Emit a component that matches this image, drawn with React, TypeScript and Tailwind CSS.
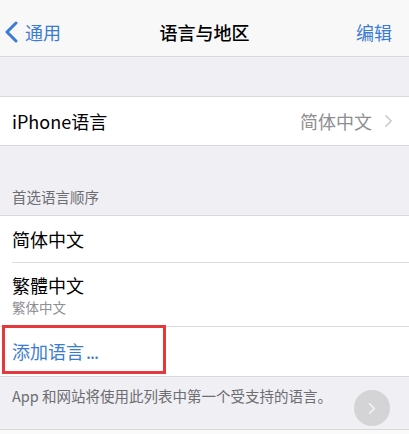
import React from 'react';

const FONT = { fontFamily: '"Noto Sans CJK SC", "Noto Sans", sans-serif' };

const Chevron: React.FC<{ className?: string }> = ({ className }) => (
    <svg viewBox="0 0 10 16" className={className} fill="none" stroke="currentColor" strokeWidth={1.8} strokeLinecap="round" strokeLinejoin="round">
        <path d="M2 2l6 6-6 6" />
    </svg>
);

const App: React.FC = () => {
    return (
        <div className="w-[409px] h-[434px] overflow-hidden bg-[#efeff4] flex flex-col" style={FONT}>
            {/* nav bar */}
            <header className="h-[57px] shrink-0 bg-[#f8f8f8] border-b border-[#d9d9dc] grid grid-cols-[1fr_auto_1fr] items-center pt-[8px]">
                <div className="flex items-center pl-[5px] text-[#3a7bd5]">
                    <svg viewBox="0 0 13 22" className="w-[13px] h-[22px]" fill="none" stroke="currentColor" strokeWidth={3} strokeLinecap="round" strokeLinejoin="round">
                        <path d="M11 2L2 11l9 9" />
                    </svg>
                    <span className="ml-[7px] text-[18px] leading-none">通用</span>
                </div>
                <div className="text-[18px] font-medium text-black leading-none">语言与地区</div>
                <div className="text-right pr-[17px] text-[18px] text-[#3a7bd5] leading-none">编辑</div>
            </header>

            <div className="h-[40px] shrink-0 border-b border-[#d9d9dc]" />

            <div className="h-[49px] shrink-0 bg-white border-b border-[#d9d9dc] flex items-center pl-[12px] pr-[16px]">
                <span className="text-[18px] text-black flex-1">iPhone语言</span>
                <span className="text-[18px] text-[#8e8e93]">简体中文</span>
                <Chevron className="w-[9px] h-[14px] ml-[12px] text-[#c7c7cc]" />
            </div>

            <div className="h-[70px] shrink-0 border-b border-[#d9d9dc] flex items-end pl-[12px] pb-[7px]">
                <span className="text-[14.5px] text-[#6d6d72]">首选语言顺序</span>
            </div>

            <div className="bg-white shrink-0 border-b border-[#d9d9dc]">
                <div className="pl-[12px]">
                    <div className="h-[47px] flex items-center border-b border-[#dcdcdf]">
                        <span className="text-[18px] text-black">简体中文</span>
                    </div>
                </div>
                <div className="h-[64px] pl-[12px] flex flex-col justify-center border-b border-[#dcdcdf]">
                    <span className="text-[18px] text-black leading-[22px]">繁體中文</span>
                    <span className="text-[13.5px] text-[#8e8e93] leading-[18px] mt-[2px]">繁体中文</span>
                </div>
                <div className="relative h-[49px] pl-[12px] flex items-center">
                    <span className="text-[18px] text-[#3a7bd5]">
                        添加语言<span className="ml-[2px] tracking-[-1px]">...</span>
                    </span>
                    <div className="absolute left-[2px] top-[-2px] w-[164px] h-[49px] border-[3px] border-[#e5383b]" />
                </div>
            </div>

            <div className="relative h-[53px] shrink-0 border-b border-[#d9d9dc] pl-[12px] pt-[6px]">
                <span className="text-[14.5px] text-[#6d6d72]">App 和网站将使用此列表中第一个受支持的语言。</span>
                <div className="absolute left-[354px] top-[13px] w-[36px] h-[36px] rounded-full bg-[#d4d4d6] flex items-center justify-center">
                    <Chevron className="w-[8px] h-[13px] text-white/80" />
                </div>
            </div>

            <div className="flex-1 bg-[#fafafa]" />
        </div>
    );
};

export default App;
